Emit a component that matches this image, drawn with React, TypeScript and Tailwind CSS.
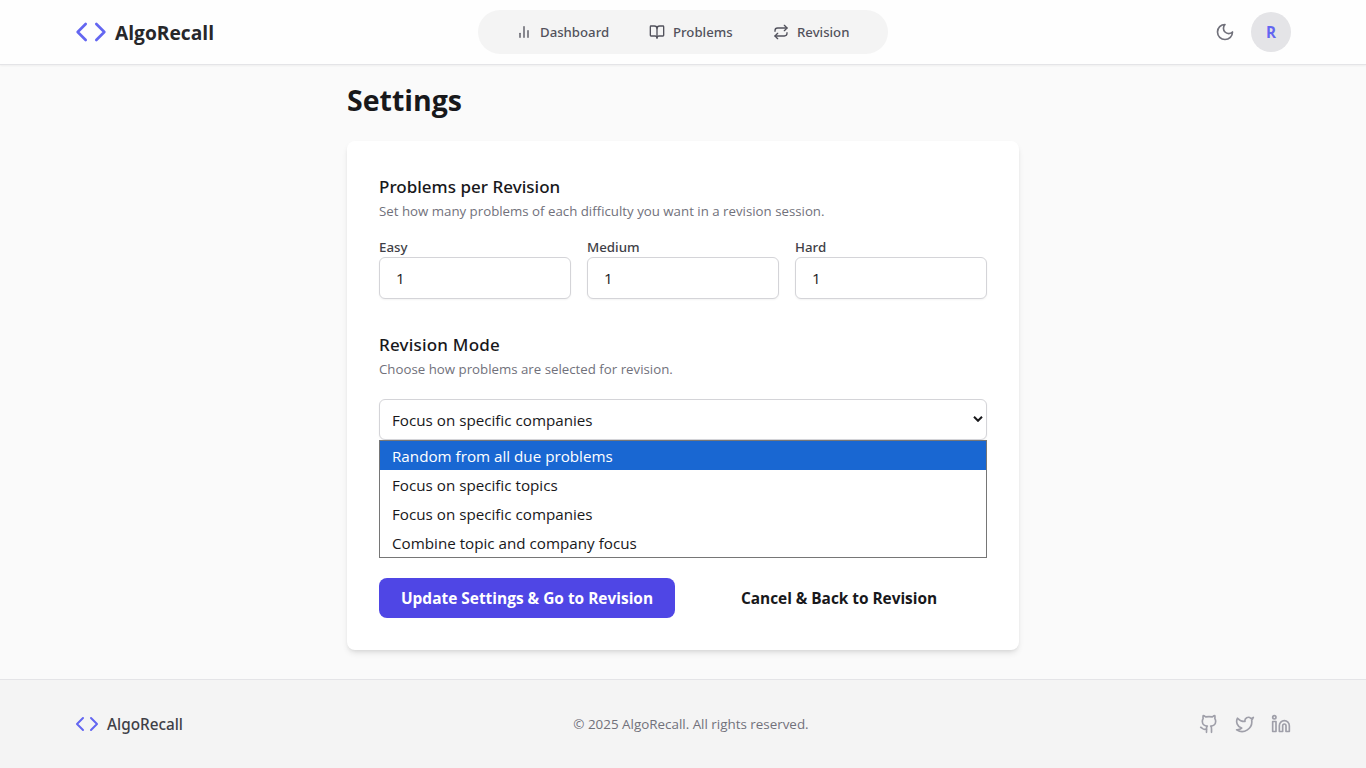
import { BookOpen, Repeat } from "lucide-react";
import type { ReactNode } from "react";

const icon = {
  viewBox: "0 0 24 24",
  fill: "none",
  stroke: "currentColor",
  strokeWidth: 2,
  strokeLinecap: "round" as const,
  strokeLinejoin: "round" as const,
};

function CodeMark({ className }: { className: string }) {
  return (
    <svg {...icon} className={className}>
      <path d="m16 18 6-6-6-6" />
      <path d="m8 6-6 6 6 6" />
    </svg>
  );
}

function BarsIcon() {
  return (
    <svg {...icon} className="size-4">
      <path d="M18 20V10" />
      <path d="M12 20V4" />
      <path d="M6 20v-6" />
    </svg>
  );
}

function MoonIcon() {
  return (
    <svg {...icon} className="size-5">
      <path d="M12 3a6 6 0 0 0 9 9 9 9 0 1 1-9-9Z" />
    </svg>
  );
}

function GithubIcon() {
  return (
    <svg {...icon} className="size-5">
      <path d="M15 22v-4a4.8 4.8 0 0 0-1-3.5c3 0 6-2 6-5.5.08-1.25-.27-2.48-1-3.5.28-1.15.28-2.35 0-3.5 0 0-1 0-3 1.5-2.64-.5-5.36-.5-8 0C6 2 5 2 5 2c-.3 1.15-.3 2.35 0 3.5A5.403 5.403 0 0 0 4 9c0 3.5 3 5.5 6 5.5-.39.49-.68 1.05-.85 1.65-.17.6-.22 1.23-.15 1.85v4" />
      <path d="M9 18c-4.51 2-5-2-7-2" />
    </svg>
  );
}

function TwitterIcon() {
  return (
    <svg {...icon} className="size-5">
      <path d="M22 4s-.7 2.1-2 3.4c1.6 10-9.4 17.3-18 11.6 2.2.1 4.4-.6 6-2C3 15.5.5 9.6 3 5c2.2 2.6 5.6 4.1 9 4-.9-4.2 4-6.6 7-3.8 1.1 0 3-1.2 3-1.2z" />
    </svg>
  );
}

function LinkedinIcon() {
  return (
    <svg {...icon} className="size-5">
      <path d="M16 8a6 6 0 0 1 6 6v7h-4v-7a2 2 0 0 0-2-2 2 2 0 0 0-2 2v7h-4v-7a6 6 0 0 1 6-6z" />
      <rect width="4" height="12" x="2" y="9" />
      <circle cx="4" cy="4" r="2" />
    </svg>
  );
}

function NavItem({ icon, label, width }: { icon: ReactNode; label: string; width: string }) {
  return (
    <a className="flex items-center gap-2 px-5 font-['Noto_Sans',sans-serif] text-[13.2px] leading-5 font-medium text-zinc-600">
      {icon}
      <span className={`${width} whitespace-nowrap`}>{label}</span>
    </a>
  );
}

function SectionHead({ title, note, tracking }: { title: string; note: string; tracking: string }) {
  return (
    <div>
      <h2 className={`${tracking} h-7 font-['Noto_Sans',sans-serif] text-[17px] leading-7 font-medium text-zinc-900`}>{title}</h2>
      <p className="h-5 text-[13.27px] leading-[21px] text-zinc-500">{note}</p>
    </div>
  );
}

const levels = ["Easy", "Medium", "Hard"];

const options = [
  { label: "Random from all due problems", style: "bg-[#1967d2] text-white" },
  { label: "Focus on specific topics", style: "text-zinc-900" },
  { label: "Focus on specific companies", style: "text-zinc-900" },
  { label: "Combine topic and company focus", style: "text-zinc-900" },
];

export default function App() {
  return (
    <div className="flex h-screen flex-col overflow-hidden bg-[#fafafa] font-['Open_Sans','Noto_Sans',sans-serif] text-zinc-900">
      <header className="h-[65px] shrink-0 border-b border-zinc-200 bg-[#fefefe] shadow-[0_1px_2px_rgba(0,0,0,0.05)]">
        <div className="mx-auto grid h-16 max-w-7xl grid-cols-[1fr_auto_1fr] items-center px-8">
          <div className="flex items-center gap-2">
            <CodeMark className="size-8 text-[#6366f1]" />
            <span className="pt-0.5 text-[19.2px] leading-7 font-bold text-zinc-800">AlgoRecall</span>
          </div>
          <nav className="flex h-11 w-[410px] items-center justify-center rounded-full bg-[#f4f4f4]">
            <NavItem icon={<BarsIcon />} label="Dashboard" width="w-[69px]" />
            <NavItem icon={<BookOpen size={16} />} label="Problems" width="w-[60px]" />
            <NavItem icon={<Repeat size={16} />} label="Revision" width="w-[53px]" />
          </nav>
          <div className="flex items-center justify-end gap-4 text-zinc-500">
            <MoonIcon />
            <div className="flex size-10 items-center justify-center rounded-full bg-zinc-200 pt-px text-[15.2px] font-bold text-[#6366f1]">R</div>
          </div>
        </div>
      </header>

      <main className="mx-auto w-2xl flex-1 pt-4">
        <h1 className="h-9 text-[28.5px] leading-[38px] font-bold">Settings</h1>
        <div className="mt-6 rounded-lg bg-white p-8 shadow-md">
          <SectionHead
            title="Problems per Revision"
            note="Set how many problems of each difficulty you want in a revision session."
            tracking="tracking-[0.02px]"
          />
          <div className="mt-4 grid grid-cols-3 gap-4">
            {levels.map((level) => (
              <div key={level}>
                <div className="h-5 font-['Noto_Sans',sans-serif] text-[13.3px] leading-[21px] font-medium text-zinc-700">{level}</div>
                <div className="flex h-[42px] items-center rounded-md border border-zinc-300 bg-white px-4 text-[15.2px] shadow-[0_1px_2px_rgba(0,0,0,0.05)]">1</div>
              </div>
            ))}
          </div>

          <div className="mt-8">
            <SectionHead
              title="Revision Mode"
              note="Choose how problems are selected for revision."
              tracking="tracking-[0.2px]"
            />
          </div>
          <div className="relative mt-5 text-[15.2px]">
            <div className="flex h-[41px] items-center justify-between rounded-md border border-zinc-300 bg-white pr-[3px] pl-3 shadow-[0_1px_2px_rgba(0,0,0,0.05)]">
              <span className="leading-6">Focus on specific companies</span>
              <svg viewBox="0 0 10 6" className="mb-px h-1.5 w-2.5" fill="none" stroke="currentColor" strokeWidth="2">
                <path d="m1 .8 4 4 4-4" />
              </svg>
            </div>
            <div className="absolute inset-x-0 top-full border border-[#767676] bg-white">
              {options.map((option) => (
                <div key={option.label} className={`${option.style} h-[29px] px-3 leading-[31px]`}>
                  {option.label}
                </div>
              ))}
            </div>
          </div>

          <div className="mt-[138px] grid grid-cols-2 gap-4 text-[15.45px] leading-6 font-bold">
            <button className="h-10 rounded-lg bg-[#4f46e5] text-white">Update Settings &amp; Go to Revision</button>
            <button className="h-10 tracking-[-0.04px]">Cancel &amp; Back to Revision</button>
          </div>
        </div>
      </main>

      <footer className="h-[89px] shrink-0 border-t border-zinc-200 bg-[#f4f4f4]">
        <div className="mx-auto flex h-full max-w-7xl items-center justify-between px-8">
          <div className="flex items-center gap-2">
            <CodeMark className="size-6 text-[#6366f1]" />
            <span className="font-['Noto_Sans',sans-serif] text-[15.3px] leading-6 font-medium text-zinc-700">AlgoRecall</span>
          </div>
          <p className="text-[13.4px] leading-5 text-zinc-500">© 2025 AlgoRecall. All rights reserved.</p>
          <div className="flex gap-4 text-zinc-400">
            <GithubIcon />
            <TwitterIcon />
            <LinkedinIcon />
          </div>
        </div>
      </footer>
    </div>
  );
}
